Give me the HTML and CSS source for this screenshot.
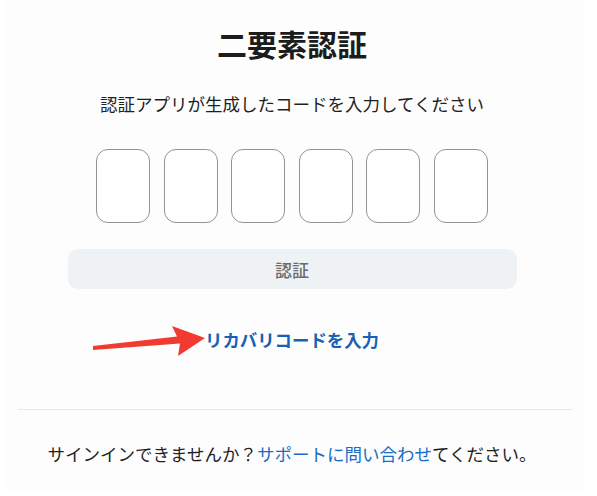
FILE: index.html
```html
<!DOCTYPE html>
<html lang="ja">
<head>
    <meta charset="UTF-8">
    <meta name="viewport" content="width=device-width, initial-scale=1.0">
    <title>二要素認証</title>
<link rel="stylesheet" href="styles.css">
</head>
<body>
    <div class="card">
        <div class="content">
            <h1>二要素認証</h1>
            <p class="lead">認証アプリが生成したコードを入力してください</p>

            <!-- コード入力 -->
            <div class="code-row">
                <input type="text" class="code-box" maxlength="1">
                <input type="text" class="code-box" maxlength="1">
                <input type="text" class="code-box" maxlength="1">
                <input type="text" class="code-box" maxlength="1">
                <input type="text" class="code-box" maxlength="1">
                <input type="text" class="code-box" maxlength="1">
            </div>

            <button class="verify-btn" type="button">認証</button>

            <a href="#" class="recovery-link">リカバリコードを入力</a>
        </div>

        <hr class="divider">

        <p class="help">サインインできませんか？<a href="#">サポートに問い合わせ</a>てください。</p>

        <!-- 注釈の矢印 -->
        <svg class="arrow" width="597" height="496" viewBox="0 0 597 496">
            <polygon points="93,346 177,336.5 172,326 205,338 178,356 180,343.5 93,350" fill="#f23b30"/>
        </svg>
    </div>
</body>
</html>
```

FILE: styles.css
```css
body {
    margin: 0;
    padding: 0;
    background-color: #ffffff;
    font-family: "Noto Sans CJK JP", "Noto Sans", sans-serif;
    color: #1f1f1f;
}

.card {
    position: relative;
    margin: 0 12px 0 5px;
    height: 490px;
    padding: 25px 13px 0;
    box-sizing: border-box;
    background-color: #fdfdfd;
}

.content {
    display: flex;
    flex-direction: column;
    align-items: center;
    padding-right: 6px;
}

h1 {
    margin: 0;
    font-size: 30px;
    line-height: 36px;
    font-weight: 700;
    color: #1c1c1c;
}

.lead {
    margin: 30px 0 0;
    font-size: 17.5px;
    line-height: 26px;
}

.code-row {
    display: flex;
    gap: 13.6px;
    margin-top: 32px;
}

.code-box {
    width: 54px;
    height: 74px;
    box-sizing: border-box;
    border: 1px solid #939393;
    border-radius: 12px;
    background-color: #ffffff;
    padding: 0;
}

.verify-btn {
    margin-top: 26px;
    width: 449px;
    height: 40px;
    border: none;
    border-radius: 10px;
    background-color: #eef2f5;
    color: #6b6b6b;
    font-family: inherit;
    font-size: 17px;
    font-weight: 500;
}

.recovery-link {
    margin-top: 39px;
    font-size: 17.4px;
    line-height: 24px;
    font-weight: 700;
    color: #1760b4;
    text-decoration: none;
}

.divider {
    margin: 57px 0 0;
    border: none;
    border-top: 1px solid #e8e8e8;
}

.help {
    margin: 31px 0 0;
    padding-right: 6px;
    font-size: 17.5px;
    line-height: 26px;
    text-align: center;
}

.help a {
    color: #1a6cc4;
    text-decoration: none;
}

.arrow {
    position: absolute;
    left: -5px;
    top: 0;
    pointer-events: none;
}
```
